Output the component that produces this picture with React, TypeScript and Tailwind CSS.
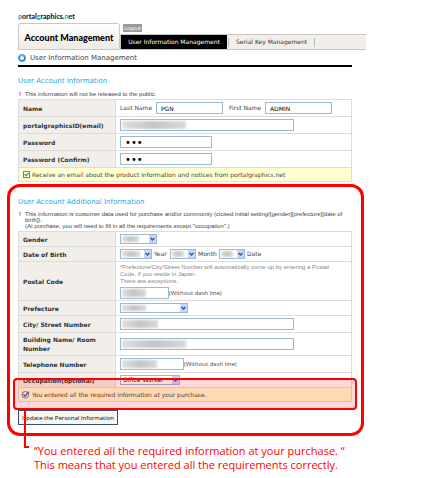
import type { ReactNode } from 'react';

const inputBase = 'block h-3 border border-[#9db8d2] bg-white px-1 leading-[10px] text-black outline-none';

function Smudge({ className }: { className: string }) {
    return (
        <span
            aria-hidden="true"
            className={`pointer-events-none absolute top-[2px] bottom-[2px] left-[2px] bg-linear-to-r from-[#e0e0e0] via-[#c4c4c4] to-[#dadada] blur-[1px] ${className}`}
        />
    );
}

function TextBox({ id, label, className, smudge, type = 'text', value = '' }: {
    id: string;
    label?: string;
    className: string;
    smudge?: string;
    type?: string;
    value?: string;
}) {
    const textSize = type === 'password' ? 'text-[10px]' : 'text-[6px]';

    return (
        <span className={`relative block shrink-0 ${className}`}>
            <input id={id} aria-label={label} type={type} defaultValue={value} className={`${inputBase} ${textSize} w-full`} />
            {smudge && <Smudge className={smudge} />}
        </span>
    );
}

function Drop({ id, label, className, smudge, value = '' }: {
    id: string;
    label?: string;
    className: string;
    smudge?: string;
    value?: string;
}) {
    return (
        <span className={`relative block shrink-0 ${className}`}>
            <select
                id={id}
                aria-label={label}
                defaultValue={value}
                className="block h-[10px] w-full appearance-none border border-[#9db8d2] bg-white pl-[2px] text-[6px] leading-[8px] text-black outline-none"
            >
                <option value={value}>{value}</option>
            </select>
            {smudge && <Smudge className={smudge} />}
            <span className="pointer-events-none absolute top-[1px] right-[1px] flex h-2 w-[7px] items-center justify-center bg-[#c3d6fb]">
                <svg viewBox="0 0 7 8" className="h-2 w-[7px]">
                    <path d="M1.6 3 3.5 5 5.4 3" fill="none" stroke="#3d5687" strokeWidth="1.4" />
                </svg>
            </span>
        </span>
    );
}

function Row({ label, htmlFor, height, children }: {
    label: string;
    htmlFor: string;
    height: string;
    children: ReactNode;
}) {
    return (
        <tr className={`border-b border-[#dcdcdc] ${height}`}>
            <th scope="row" className="w-[97px] border-r border-[#dcdcdc] bg-[#f2eee9] px-1 text-left text-[6px] leading-[9px] font-bold text-[#333]">
                <label htmlFor={htmlFor}>{label}</label>
            </th>
            <td className="px-1">{children}</td>
        </tr>
    );
}

function Alert() {
    return <span className="mr-[3px] w-1 shrink-0 text-center text-[6px] font-bold text-[#f00]">!</span>;
}

export default function App() {
    return (
        <div className="min-h-screen bg-white pt-[11px] font-['DejaVu_Sans','Liberation_Sans',sans-serif] text-[6px] leading-[8px] text-[#444]">
            <header className="max-w-[366px] pl-[18px]">
                <a href="#home" className="block w-fit font-['Lato','Liberation_Sans',sans-serif] text-[7px] leading-[10px] font-black text-[#222]">
                    <span className="text-[#14a3e8]">p</span>ortal<span className="text-[#14a3e8]">g</span>raphics.<span className="text-[#14a3e8]">n</span>et
                </a>
                <div className="mt-[2px] flex h-[27px] items-end">
                    <div className="flex h-[27px] w-[102px] shrink-0 items-center justify-center rounded-t-[3px] border border-[#cbc7c3] bg-linear-to-b from-white to-[#efebe6] pt-[3px] font-['Lato','Liberation_Sans',sans-serif] text-[9px] leading-[12px] font-black whitespace-nowrap text-black">
                        Account Management
                    </div>
                    <div className="flex min-w-0 grow flex-col items-start">
                        <button type="button" className="mb-[2px] ml-[3px] h-2 w-[19px] bg-[#999] text-center text-[5px] leading-[8px] text-white">
                            Logout
                        </button>
                        <nav className="flex h-4 w-full items-center border-y border-[#c9c5c1] bg-[#f2eee9] text-[6px] whitespace-nowrap">
                            <a href="#user" className="flex h-[14px] w-[107px] items-center justify-center border-l border-[#c9c5c1] bg-black text-white">
                                User Information Management
                            </a>
                            <a href="#serial" className="ml-[1px] flex h-[9px] items-center border-x border-[#bbb] px-[7px] text-[#333]">
                                Serial Key Management
                            </a>
                        </nav>
                    </div>
                </div>
            </header>

            <main className="max-w-[352px]">
                <div className="ml-[18px] flex h-[17px] items-center gap-1 border-b-2 border-black text-[7px] text-[#444]">
                    <svg viewBox="0 0 8 8" className="size-2">
                        <circle cx="4" cy="4" r="2.9" fill="#fff" stroke="#1789d6" strokeWidth="1.8" />
                        <path d="M1.6 2.4A2.9 2.9 0 0 1 6.4 2.4" fill="none" stroke="#6fb9e8" strokeWidth="1" />
                    </svg>
                    <h1>User Information Management</h1>
                </div>
                <section className="pt-[9px] pl-[18px]">
                    <h2 className="text-[7px] leading-[10px] text-[#26a5e4]">User Account Information</h2>
                    <p className="mt-[5px] flex font-['Liberation_Sans',sans-serif] text-[6px] leading-[7px]">
                        <Alert />This information will not be released to the public.
                    </p>
                    <table className="mt-[1px] w-full border-collapse border border-[#dcdcdc] text-[6px]">
                        <tbody>
                            <Row label="Name" htmlFor="last" height="h-[17px]">
                                <div className="flex items-center gap-[2px] whitespace-nowrap">
                                    <label htmlFor="last" className="w-[34px]">Last Name</label>
                                    <TextBox id="last" className="w-[67px]" value="PGN" />
                                    <label htmlFor="first" className="ml-1 w-[34px]">First Name</label>
                                    <TextBox id="first" className="w-[67px]" value="ADMIN" />
                                </div>
                            </Row>
                            <Row label="portalgraphicsID(email)" htmlFor="email" height="h-[17px]">
                                <TextBox id="email" className="w-[174px]" smudge="w-[64px]" />
                            </Row>
                            <Row label="Password" htmlFor="pass" height="h-[17px]">
                                <TextBox id="pass" type="password" className="w-[92px]" value="abc" />
                            </Row>
                            <Row label="Password (Confirm)" htmlFor="confirm" height="h-[17px]">
                                <TextBox id="confirm" type="password" className="w-[92px]" value="abc" />
                            </Row>
                            <tr className="h-[14px] bg-[#ffffd2]">
                                <td colSpan={2} className="px-1">
                                    <label className="flex items-center gap-[2px]">
                                        <span className="relative block size-[7px]">
                                            <input type="checkbox" defaultChecked className="block size-[7px] appearance-none border border-[#5d86ab] bg-white" />
                                            <svg viewBox="0 0 7 7" className="pointer-events-none absolute inset-0 size-[7px]">
                                                <path d="M1.7 3.2 3 4.8 5.5 1.8" fill="none" stroke="#21a121" strokeWidth="1.2" />
                                            </svg>
                                        </span>
                                        Receive an email about the product information and notices from portalgraphics.net
                                    </label>
                                </td>
                            </tr>
                        </tbody>
                    </table>
                </section>
            </main>

            <section className="mt-[2px] ml-[7px] max-w-[357px] rounded-[13px] border-3 border-[#f00] pt-[10px] pr-[9px] pb-2 pl-2">
                <h2 className="text-[7px] leading-[10px] text-[#26a5e4]">User Account Additional Information</h2>
                <div className="mt-[4px] flex font-['Liberation_Sans',sans-serif] text-[6px] leading-[6px]">
                    <Alert />
                    <p className="whitespace-nowrap">
                        This information is customer data used for purchase and/or community (closed initial setting/[gender][prefecture][date of
                        <br />
                        birth]).
                        <br />
                        (At purchase, you will need to fill in all the requirements except "occupation".)
                    </p>
                </div>
                <div className="relative mt-[2px]">
                    <table className="w-full border-collapse border border-[#dcdcdc] text-[6px]">
                        <tbody>
                            <Row label="Gender" htmlFor="gender" height="h-[15px]">
                                <Drop id="gender" className="w-[37px]" smudge="w-[17px]" />
                            </Row>
                            <Row label="Date of Birth" htmlFor="year" height="h-[15px]">
                                <div className="flex items-center gap-[2px]">
                                    <Drop id="year" className="w-8" smudge="w-[18px]" />
                                    <label htmlFor="year" className="w-[14px]">Year</label>
                                    <Drop id="month" className="w-[26px]" smudge="w-[12px]" />
                                    <label htmlFor="month" className="w-[19px]">Month</label>
                                    <Drop id="date" className="w-[26px]" smudge="w-[12px]" />
                                    <label htmlFor="date">Date</label>
                                </div>
                            </Row>
                            <Row label="Postal Code" htmlFor="postal" height="h-[39px]">
                                <p className="font-['Liberation_Sans',sans-serif] text-[6px] leading-[7px] text-[#888]">
                                    *Prefecture/City/Street Number will automatically come up by entering a Postal
                                    <br />
                                    Code, if you reside in Japan.
                                    <br />
                                    There are exceptions.
                                </p>
                                <div className="mt-[2px] flex items-center font-['Open_Sans','Liberation_Sans',sans-serif] text-[6px]">
                                    <TextBox id="postal" className="w-[49px]" smudge="w-[24px]" />
                                    (Without dash line)
                                </div>
                            </Row>
                            <Row label="Prefecture" htmlFor="prefecture" height="h-[15px]">
                                <Drop id="prefecture" className="w-[68px]" smudge="w-[24px]" />
                            </Row>
                            <Row label="City/ Street Number" htmlFor="city" height="h-[17px]">
                                <TextBox id="city" className="w-[174px]" smudge="w-[36px]" />
                            </Row>
                            <Row label="Building Name/ Room Number" htmlFor="building" height="h-[23px]">
                                <TextBox id="building" className="w-[174px]" smudge="w-[64px]" />
                            </Row>
                            <Row label="Telephone Number" htmlFor="phone" height="h-[17px]">
                                <div className="flex items-center font-['Open_Sans','Liberation_Sans',sans-serif] text-[6px]">
                                    <TextBox id="phone" className="w-[64px]" smudge="w-[35px]" />
                                    (Without dash line)
                                </div>
                            </Row>
                            <Row label="Occupation(optional)" htmlFor="occupation" height="h-[15px]">
                                <Drop id="occupation" className="w-[60px]" value="Office Worker" />
                            </Row>
                            <tr className="h-[14px] bg-[#ffffd2]">
                                <td colSpan={2} className="px-[2px]">
                                    <div className="flex items-center gap-[2px]">
                                        <svg viewBox="0 0 9 9" className="size-[9px]">
                                            <circle cx="4.3" cy="4.8" r="3.3" fill="#fff" stroke="#5a7fae" strokeWidth="1" />
                                            <path d="M2.4 4.3 4 6.2 7.8 1.8" fill="none" stroke="#2d62ad" strokeWidth="1.4" />
                                        </svg>
                                        You entered all the required information at your purchase.
                                    </div>
                                </td>
                            </tr>
                        </tbody>
                    </table>
                    <div className="pointer-events-none absolute -right-[5px] -bottom-2 -left-[5px] h-8 rounded-[4px] border-2 border-[#f00] bg-[#ff0000]/15">
                        <span className="absolute top-full left-[9px] h-[40px] w-[5px] border-b-2 border-l-2 border-[#f00]" />
                    </div>
                </div>
                <button type="button" className="mt-2 block h-[15px] w-[100px] border border-[#34506e] bg-[#f6f5f1] text-center font-['Open_Sans','Liberation_Sans',sans-serif] text-[6px] whitespace-nowrap text-black">
                    Update the Personal Information
                </button>
            </section>

            <p className="mt-2 pl-[34px] font-['Open_Sans','Liberation_Sans',sans-serif] text-[11px] leading-[14px] text-[#f00]">
                “You entered all the required information at your purchase. “
                <br />
                This means that you entered all the requirements correctly.
            </p>
        </div>
    );
}
